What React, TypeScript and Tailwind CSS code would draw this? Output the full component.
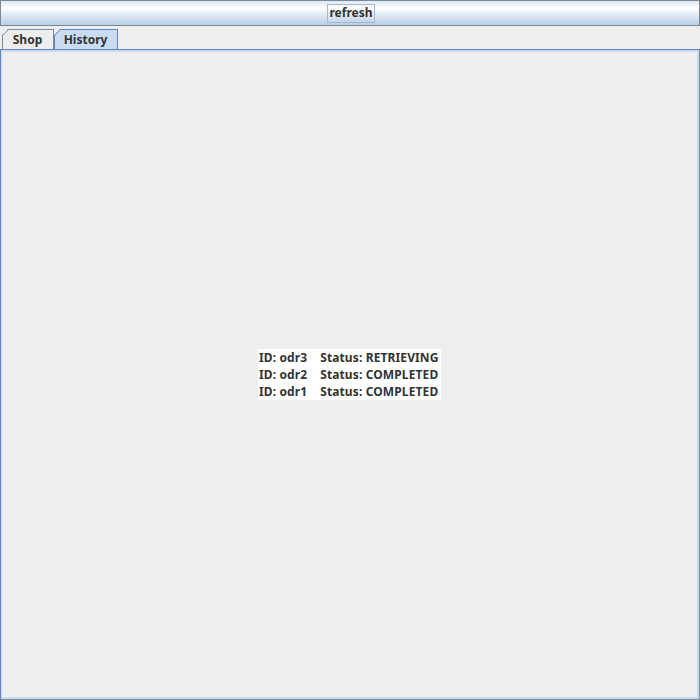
import React from "react";

const font = { fontFamily: '"Noto Sans", "Open Sans", sans-serif' };

function Tab({ label, selected, width }: { label: string; selected: boolean; width: number }) {
  const bg = selected ? "#c8ddf2" : "#eeeeee";
  const line = selected ? "#6382bf" : "#7a8a99";
  return (
    <div
      className="relative h-[20px] flex items-center justify-center text-[12px] font-bold text-[#333333]"
      style={{ width, background: bg, borderTop: `1px solid ${line}`, borderLeft: `1px solid ${line}`, borderRight: `1px solid ${line}` }}
    >
      <svg className="absolute left-[-1px] top-[-1px]" width="7" height="7" viewBox="0 0 7 7">
        <polygon points="0,0 6,0 0,6" fill="#eeeeee" />
        <line x1="0.5" y1="6.5" x2="6.5" y2="0.5" stroke={line} strokeWidth="1" />
      </svg>
      <span className="relative pt-[1px] pr-[1px]">{label}</span>
    </div>
  );
}

export default function App() {
  return (
    <div className="w-[700px] h-[700px] bg-[#eeeeee] flex flex-col overflow-hidden" style={font}>
      <div
        className="h-[26px] border border-[#7a8a99] flex items-center justify-center shrink-0"
        style={{ background: "linear-gradient(to bottom, #dde8f3 0%, #ffffff 30%, #dde8f3 60%, #b8cfe5 100%)" }}
      >
        <div className="border border-[#a3b8cc] h-[19px] px-[1px] ml-[2px] flex items-center text-[12px] font-bold text-[#333333]">
          refresh
        </div>
      </div>
      <div className="h-[3px] shrink-0" />
      <div className="flex pl-[2px] h-[20px] shrink-0">
        <Tab label="Shop" selected={false} width={52} />
        <Tab label="History" selected={true} width={64} />
      </div>
      <div className="flex-1 flex border-t border-l border-t-[#6382bf] border-l-[#6382bf] border-r border-b border-r-[#7a8a99] border-b-[#7a8a99] bg-[#c8ddf2] pt-[2px] pl-[1px] pr-[2px] pb-[2px]">
        <div className="flex-1 bg-[#eeeeee] flex items-center justify-center">
          <div className="bg-white w-[183px] text-[12px] font-bold text-[#333333] tracking-[0.12px]">
            {["ID: odr3    Status: RETRIEVING", "ID: odr2    Status: COMPLETED", "ID: odr1    Status: COMPLETED"].map((t) => (
              <div key={t} className="h-[17px] pl-[1px] flex items-center whitespace-pre leading-none">
                {t}
              </div>
            ))}
          </div>
        </div>
      </div>
    </div>
  );
}
